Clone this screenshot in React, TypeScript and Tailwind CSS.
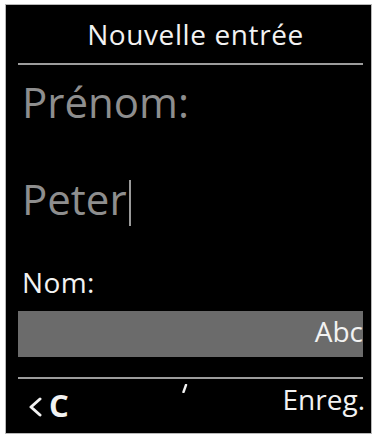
import React from "react";

/**
 * Phone handset screen — "Nouvelle entrée" contact form.
 */
export default function App() {
  return (
    <div
      className="w-[376px] h-[437px] bg-white pl-[5px] pr-[4px] pt-[4px] pb-[3px]"
      style={{ fontFamily: '"Open Sans", "Noto Sans", sans-serif' }}
    >
      <div className="h-full w-full bg-black border border-[#b8b8b8] flex flex-col">
        {/* header */}
        <div className="mt-[15px] text-center text-[28px] leading-[28px] tracking-[0.6px] text-[#f2f2f2] pl-[14px]">
          Nouvelle entrée
        </div>
        <div className="mt-[15px] ml-[12px] mr-[8px] h-[2px] bg-[#9c9c9c]" />

        {/* first name */}
        <div className="mt-[16px] pl-[16px] text-[42px] leading-[42px] text-[#8e8e8e]">
          Prénom:
        </div>
        <div className="mt-[55px] pl-[16px] h-[42px] flex items-start text-[42px] leading-[42px] text-[#8e8e8e]">
          <span>Peter</span>
          <span className="ml-[2px] mt-[2px] w-[2px] h-[46px] bg-[#9a9a9a]" />
        </div>

        {/* last name */}
        <div className="mt-[48px] pl-[16px] text-[28px] leading-[28px] tracking-[0.4px] text-[#f2f2f2]">
          Nom:
        </div>
        <div className="mt-[15px] ml-[12px] mr-[8px] h-[46px] bg-[#6b6b6b] flex justify-end items-start pt-[6px] text-[28px] leading-[28px] text-[#f2f2f2]">
          Abc
        </div>

        {/* softkeys */}
        <div className="mt-[20px] ml-[12px] mr-[8px] h-[2px] bg-[#9c9c9c]" />
        <div className="mt-[6px] ml-[12px] mr-[6px] flex items-start text-[#f2f2f2]">
          <svg
            className="mt-[12px] ml-[10px] shrink-0"
            width="14"
            height="20"
            viewBox="0 0 14 20"
            fill="none"
            stroke="#f2f2f2"
            strokeWidth="3"
            strokeLinecap="round"
            strokeLinejoin="round"
          >
            <polyline points="12,2 3,10 12,18" />
          </svg>
          <span className="mt-[5px] ml-[7px] text-[31px] leading-[31px] font-bold">C</span>
          <div className="flex-1">
            <svg className="mt-[-1px] ml-[112px]" width="8" height="9" viewBox="0 0 8 9">
              <path d="M5 1 L2.5 8" stroke="#f2f2f2" strokeWidth="2.4" strokeLinecap="round" />
            </svg>
          </div>
          <div className="text-[28px] leading-[28px]">Enreg.</div>
        </div>
      </div>
    </div>
  );
}
